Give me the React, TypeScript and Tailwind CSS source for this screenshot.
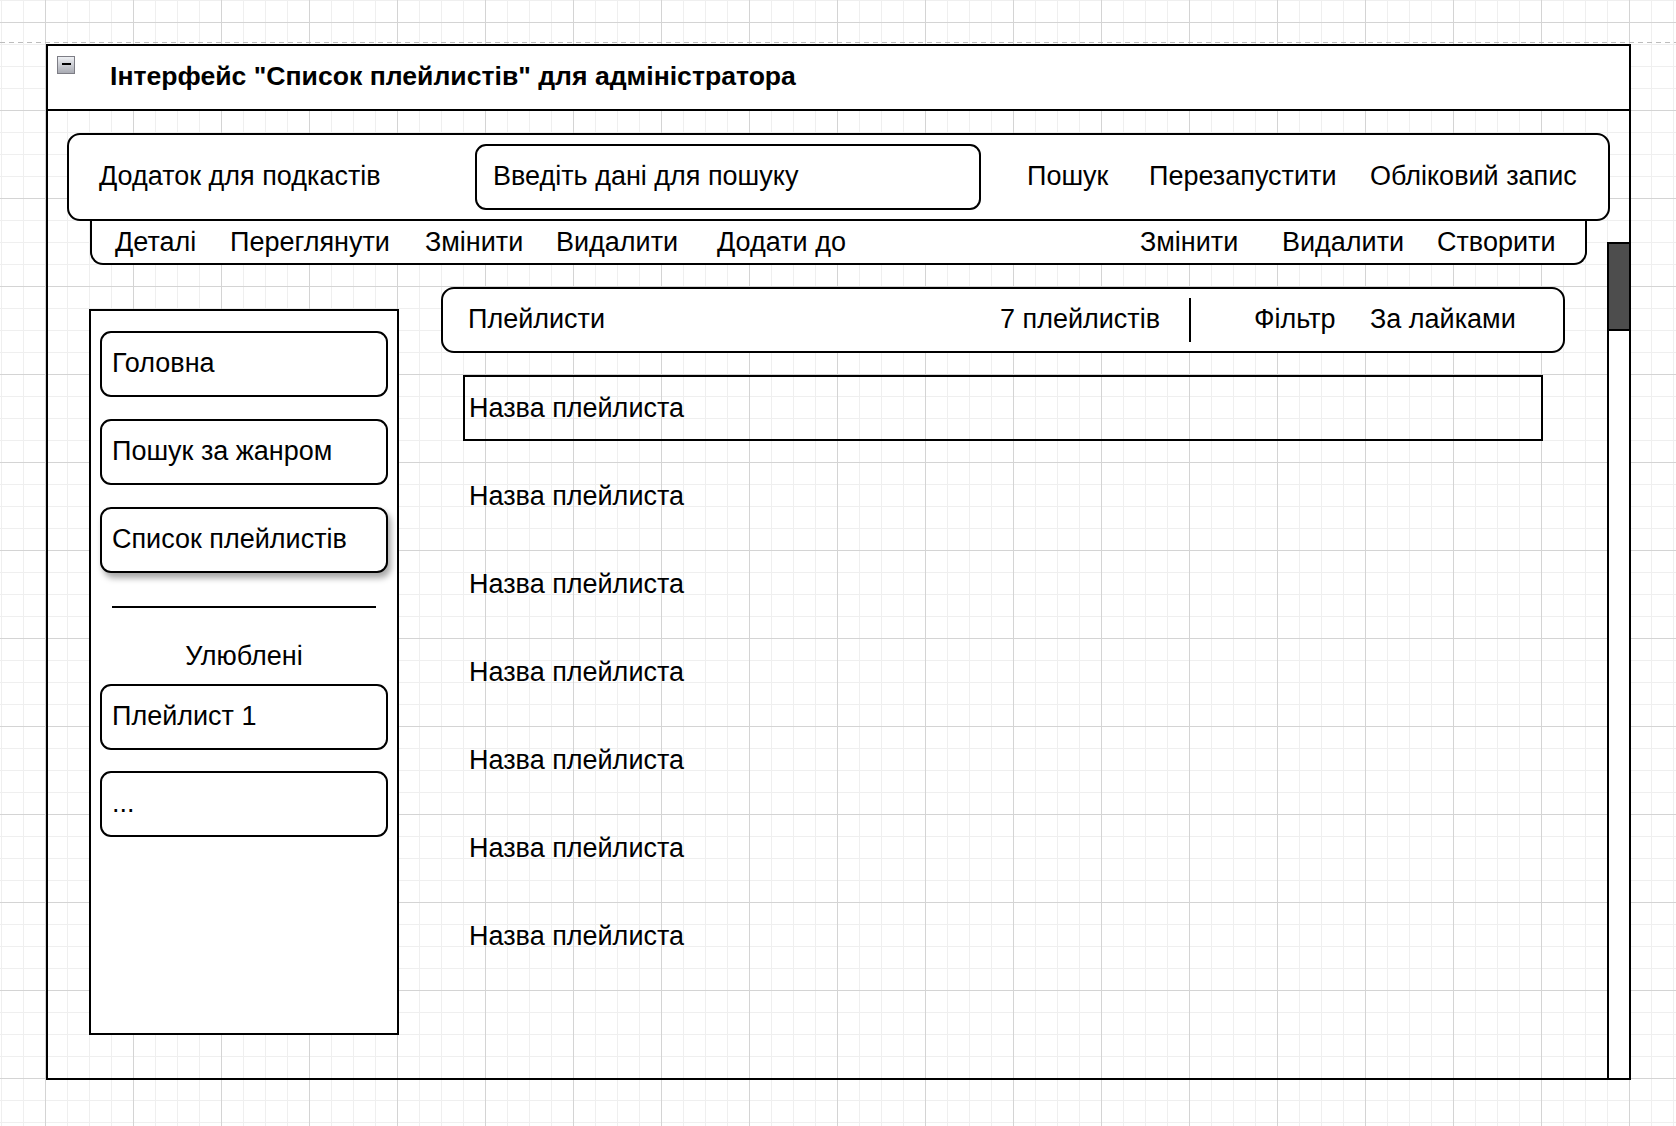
const topLinks = [
  { label: 'Пошук', w: 'w-[122px]' },
  { label: 'Перезапустити', w: 'w-[221px]' },
  { label: 'Обліковий запис', w: '' },
]

const actions = [
  { label: 'Деталі', w: 'w-[115px]' },
  { label: 'Переглянути', w: 'w-[195px]' },
  { label: 'Змінити', w: 'w-[131px]' },
  { label: 'Видалити', w: 'w-[161px]' },
  { label: 'Додати до', w: 'w-[423px]' },
  { label: 'Змінити', w: 'w-[142px]' },
  { label: 'Видалити', w: 'w-[155px]' },
  { label: 'Створити', w: '' },
]

const rows = Array.from({ length: 7 }, (_, i) => i)

const txt = 'leading-none whitespace-nowrap'
// labels inside the rounded boxes sit a little above centre
const txtUp = 'leading-none whitespace-nowrap mb-[2px]'

function NavButton({ label, shadow = false }: { label: string; shadow?: boolean }) {
  return (
    <div
      className={`h-[66px] shrink-0 border-2 border-black rounded-[11px] bg-white flex items-center pl-[10px] ${
        shadow ? 'shadow-[3px_5px_6px_rgba(0,0,0,0.35)]' : ''
      }`}
    >
      <span className={txtUp}>{label}</span>
    </div>
  )
}

function CollapseIcon() {
  return (
    <div className="ml-[9px] mt-[10px] w-[18px] h-[18px] shrink-0 border border-[#7d7d85] bg-gradient-to-b from-[#eef0f4] to-[#a9abb3] flex justify-center pt-[6px]">
      <div className="w-[9px] h-[2px] bg-black" />
    </div>
  )
}

export default function App() {
  return (
    <div className="w-[1676px] h-[1126px] overflow-hidden pt-[42px] text-black text-[27px] font-['Liberation_Sans',Arial,Helvetica,sans-serif] bg-white bg-[image:linear-gradient(to_right,#d4d4d4_1px,transparent_1px),linear-gradient(to_bottom,#d4d4d4_1px,transparent_1px),linear-gradient(to_right,#efefef_1px,transparent_1px),linear-gradient(to_bottom,#efefef_1px,transparent_1px)] bg-[length:88px_88px,88px_88px,22px_22px,22px_22px] bg-[position:45px_22px,45px_22px,1px_0px,1px_0px]">
      {/* page break line */}
      <div className="h-px w-full bg-[image:repeating-linear-gradient(to_right,#bdbdbd_0px,#bdbdbd_5px,transparent_5px,transparent_9px)]" />

      {/* window */}
      <div className="mt-px ml-[46px] w-[1585px] h-[1036px] border-2 border-black flex flex-col">
        <div className="h-[65px] shrink-0 bg-white border-b-2 border-black flex items-start">
          <CollapseIcon />
          <div className="ml-[35px] self-center font-bold text-[26.6px] leading-none mb-[2px]">
            Інтерфейс "Список плейлистів" для адміністратора
          </div>
        </div>

        <div className="flex-1 flex min-h-0">
          <div className="flex-1 min-w-0 flex flex-col">
            {/* top toolbar */}
            <div className="mt-[22px] ml-[19px] w-[1543px] h-[88px] shrink-0 border-2 border-black rounded-[13px] bg-white flex items-center">
              <div className={`w-[406px] pl-[30px] ${txtUp}`}>Додаток для подкастів</div>
              <div className="w-[506px] h-[66px] border-2 border-black rounded-[11px] flex items-center pl-[16px]">
                <span className={txtUp}>Введіть дані для пошуку</span>
              </div>
              <div className="ml-[46px] flex items-center">
                {topLinks.map((l) => (
                  <div key={l.label} className={`${l.w} ${txtUp}`}>
                    {l.label}
                  </div>
                ))}
              </div>
            </div>

            {/* actions bar */}
            <div className="ml-[42px] w-[1497px] h-[44px] shrink-0 border-2 border-t-0 border-black rounded-b-[13px] bg-white flex items-center pl-[23px]">
              {actions.map((a, i) => (
                <div key={i} className={`${a.w} ${txt}`}>
                  {a.label}
                </div>
              ))}
            </div>

            <div className="flex items-start">
              {/* sidebar */}
              <div className="ml-[41px] mt-[44px] w-[310px] h-[726px] shrink-0 border-2 border-black bg-white flex flex-col px-[9px] pt-[20px]">
                <div className="flex flex-col gap-[22px]">
                  <NavButton label="Головна" />
                  <NavButton label="Пошук за жанром" />
                  <NavButton label="Список плейлистів" shadow />
                </div>
                <div className="mt-[33px] ml-[12px] w-[264px] h-[2px] bg-black" />
                <div className="mt-[33px] h-[30px] flex items-center justify-center">
                  <span className={txt}>Улюблені</span>
                </div>
                <div className="mt-[13px]">
                  <NavButton label="Плейлист 1" />
                </div>
                <div className="mt-[21px]">
                  <NavButton label="..." />
                </div>
              </div>

              {/* playlists */}
              <div className="ml-[42px] mt-[22px] flex flex-col">
                <div className="w-[1124px] h-[66px] border-2 border-black rounded-[13px] bg-white flex items-center">
                  <div className={`w-[557px] pl-[25px] ${txtUp}`}>Плейлисти</div>
                  <div className={`w-[189px] ${txtUp}`}>7 плейлистів</div>
                  <div className="w-[2px] h-[44px] bg-black" />
                  <div className={`ml-[63px] w-[116px] ${txtUp}`}>Фільтр</div>
                  <div className={txtUp}>За лайками</div>
                </div>
                <div className="mt-[22px] ml-[22px] flex flex-col gap-[22px]">
                  {rows.map((i) => (
                    <div
                      key={i}
                      className={`w-[1080px] h-[66px] border-2 flex items-center pl-[4px] ${
                        i === 0 ? 'border-black' : 'border-transparent'
                      }`}
                    >
                      <span className={txt}>Назва плейлиста</span>
                    </div>
                  ))}
                </div>
              </div>
            </div>
          </div>

          {/* scrollbar */}
          <div className="w-[22px] shrink-0 flex flex-col pt-[131px]">
            <div className="flex-1 border-t-2 border-l-2 border-black bg-white">
              <div className="h-[87px] bg-[#4d4d4d] border-b-2 border-black" />
            </div>
          </div>
        </div>
      </div>
    </div>
  )
}
